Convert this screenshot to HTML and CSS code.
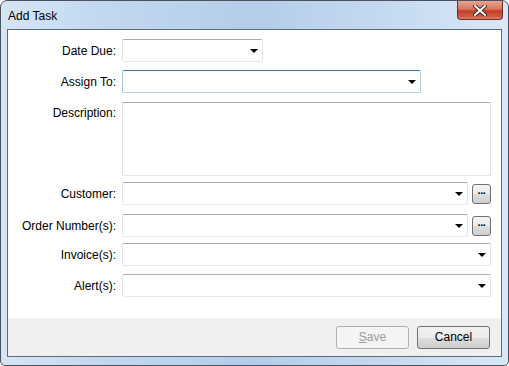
FILE: index.html
```html
<!DOCTYPE html>
<html lang="en">
<head>
    <meta charset="UTF-8">
    <title>Add Task</title>
    <link rel="stylesheet" href="styles.css">
</head>
<body>
<div class="window">
    <div class="titlebar">
        <span class="title">Add Task</span>
        <div class="close-btn">
            <svg width="14" height="11" viewBox="0 0 14 11">
                <path d="M2 1 L12 10 M12 1 L2 10" stroke="#3a2a2a" stroke-width="4" stroke-linecap="round"/>
                <path d="M2 1 L12 10 M12 1 L2 10" stroke="#ffffff" stroke-width="2" stroke-linecap="round"/>
            </svg>
        </div>
    </div>

    <div class="client">
        <div class="form">
            <div class="row gap-8">
                <label>Date Due:</label>
                <div class="combo combo-short"><span class="arrow"></span></div>
            </div>
            <div class="row gap-9">
                <label>Assign To:</label>
                <div class="combo combo-mid focused"><span class="arrow"></span></div>
            </div>
            <div class="row row-top gap-6">
                <label>Description:</label>
                <div class="textarea"></div>
            </div>
            <div class="row gap-9">
                <label>Customer:</label>
                <div class="combo combo-fill"><span class="arrow"></span></div>
                <div class="dots-btn">&middot;&middot;&middot;</div>
            </div>
            <div class="row gap-6">
                <label>Order Number(s):</label>
                <div class="combo combo-fill"><span class="arrow"></span></div>
                <div class="dots-btn">&middot;&middot;&middot;</div>
            </div>
            <div class="row gap-8">
                <label>Invoice(s):</label>
                <div class="combo combo-fill"><span class="arrow"></span></div>
            </div>
            <div class="row">
                <label>Alert(s):</label>
                <div class="combo combo-fill"><span class="arrow"></span></div>
            </div>
        </div>

        <div class="footer">
            <button class="btn" disabled><u>S</u>ave</button>
            <button class="btn">Cancel</button>
        </div>
    </div>
</div>
</body>
</html>
```

FILE: styles.css
```css
body {
    margin: 0;
    padding: 0;
    font-family: "Liberation Sans", Arial, sans-serif;
    font-size: 12px;
    color: #000;
    background: #fff;
}

.window {
    width: 509px;
    height: 366px;
    box-sizing: border-box;
    border: 1px solid #4a5260;
    border-radius: 7px 7px 5px 5px;
    background: linear-gradient(90deg, #d6e5f5 0%, #c2d8ef 20%, #b4cde8 50%, #c8dcf1 80%, #d9e7f6 100%);
    display: flex;
    flex-direction: column;
    overflow: hidden;
}

.titlebar {
    height: 28px;
    display: flex;
    align-items: flex-start;
    justify-content: space-between;
    padding: 0 5px 0 7px;
}

.title {
    margin-top: 8px;
    font-size: 12px;
    color: #000;
}

.close-btn {
    width: 46px;
    height: 19px;
    box-sizing: border-box;
    border: 1px solid #6e2d25;
    border-top: none;
    border-radius: 0 0 4px 4px;
    background: linear-gradient(180deg, #e8a493 0%, #d9765f 45%, #c23f26 55%, #cc5a3f 85%, #e0836b 100%);
    display: flex;
    align-items: center;
    justify-content: center;
}

.client {
    flex: 1;
    margin: 0 6px 8px 6px;
    border: 1px solid #5a6a80;
    background: #fff;
    display: flex;
    flex-direction: column;
}

.form {
    flex: 1;
    padding-top: 9px;
}

.row {
    display: flex;
    align-items: center;
}

.gap-6 {
    margin-bottom: 6px;
}

.gap-8 {
    margin-bottom: 8px;
}

.gap-9 {
    margin-bottom: 9px;
}

.row-top {
    align-items: flex-start;
}

.row-top label {
    margin-top: 4px;
}

label {
    width: 108px;
    text-align: right;
    margin-right: 6px;
    flex-shrink: 0;
}

.combo {
    position: relative;
    height: 23px;
    box-sizing: border-box;
    border: 1px solid;
    border-color: #abadb3 #e2e3ea #e3e9ef #e2e3ea;
    border-radius: 2px;
    background: #fff;
}

.combo-short {
    width: 141px;
}

.combo-mid {
    width: 299px;
}

.combo-fill {
    flex: 1;
    margin-right: 10px;
}

.row .dots-btn {
    margin-left: -6px;
}

.focused {
    border-color: #3d7bad #b5cfe7 #b5cfe7 #a4c9e3;
}

.arrow {
    position: absolute;
    right: 4px;
    top: 9px;
    width: 0;
    height: 0;
    border-left: 4px solid transparent;
    border-right: 4px solid transparent;
    border-top: 4px solid #000;
}

.textarea {
    flex: 1;
    margin-right: 10px;
    height: 74px;
    box-sizing: border-box;
    border: 1px solid;
    border-color: #abadb3 #e2e3ea #e3e9ef #e2e3ea;
}

.dots-btn {
    width: 19px;
    height: 20px;
    box-sizing: border-box;
    margin-right: 10px;
    border: 1px solid #707070;
    border-radius: 3px;
    background: linear-gradient(180deg, #f4f4f4 0%, #ebebeb 50%, #dddddd 51%, #cfcfcf 100%);
    font-size: 11px;
    font-weight: bold;
    line-height: 16px;
    text-align: center;
    letter-spacing: -1px;
}

.footer {
    height: 38px;
    background: #f0f0f0;
    display: flex;
    justify-content: flex-end;
    align-items: center;
    gap: 8px;
    padding-right: 11px;
}

.btn {
    width: 73px;
    height: 23px;
    font-family: "Liberation Sans", Arial, sans-serif;
    font-size: 12px;
    color: #000;
    border: 1px solid #707070;
    border-radius: 3px;
    background: linear-gradient(180deg, #f2f2f2 0%, #ebebeb 50%, #dddddd 51%, #cfcfcf 100%);
    padding: 0;
}

.btn:disabled {
    color: #9a9a9a;
    border-color: #adb2b5;
    background: #f4f4f4;
}
```
